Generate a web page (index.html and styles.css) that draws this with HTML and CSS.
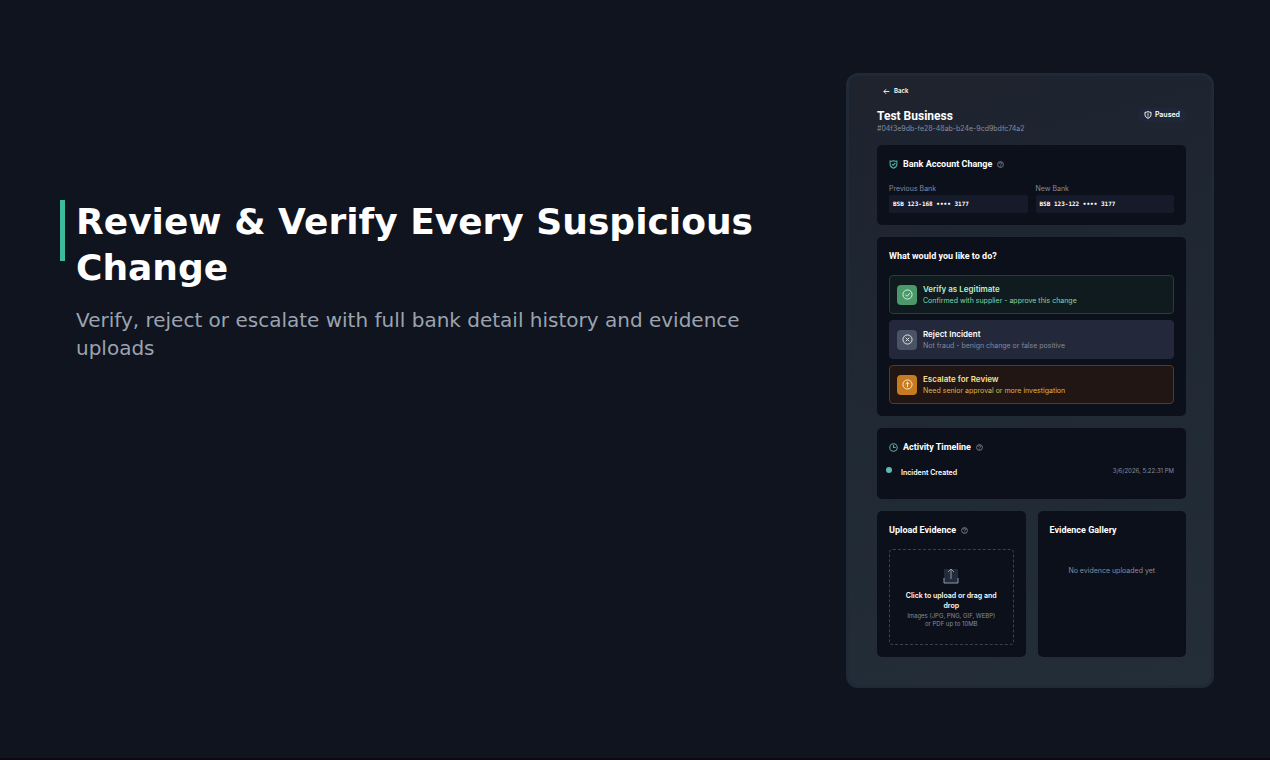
FILE: index.html
```html
<!DOCTYPE html>
<html lang="en">
<head>
    <meta charset="UTF-8">
    <meta name="viewport" content="width=device-width, initial-scale=1.0">
    <title>Review &amp; Verify Every Suspicious Change</title>
    <link rel="stylesheet" href="styles.css">
</head>
<body>
    <main class="slide">
        <section class="copy">
            <span class="accent"></span>
            <div class="copy-text">
                <h1>Review &amp; Verify Every Suspicious Change</h1>
                <p>Verify, reject or escalate with full bank detail history and evidence uploads</p>
            </div>
        </section>

        <section class="panel">
            <button class="back" type="button">
                <svg viewBox="0 0 24 24"><path d="M22 12H3M11 4l-8 8 8 8"/></svg>
                Back
            </button>
            <header class="incident">
                <div>
                    <h2>Test Business</h2>
                    <p>#04f3e9db-fe28-48ab-b24e-9cd9bdfc74a2</p>
                </div>
                <span class="status">
                    <svg viewBox="0 0 24 24"><path d="M3 4c3 0 6-1 9-2 3 1 6 2 9 2v7c0 5-4 9-9 11-5-2-9-6-9-11zM12 7v7M12 16v2"/></svg>
                    Paused
                </span>
            </header>

            <article class="card bank">
                <h3>
                    <svg class="lead" viewBox="0 0 24 24"><path d="M3 3c3 1 6 0 9-1 3 1 6 2 9 1v8c0 5-4 9-9 11-5-2-9-6-9-11zM8 11l3 3 6-6"/></svg>
                    Bank Account Change
                    <svg class="help" viewBox="0 0 24 24"><circle cx="12" cy="12" r="10"/><path d="M8 9c0-5 8-4 8 0 0 3-4 2-4 6M12 17v2"/></svg>
                </h3>
                <dl class="banks">
                    <div>
                        <dt>Previous Bank</dt>
                        <dd>BSB 123-168 •••• 3177</dd>
                    </div>
                    <div>
                        <dt>New Bank</dt>
                        <dd>BSB 123-122 •••• 3177</dd>
                    </div>
                </dl>
            </article>

            <article class="card">
                <h3>What would you like to do?</h3>
                <div class="actions">
                    <button class="action verify" type="button">
                        <span class="tile"><svg viewBox="0 0 24 24"><circle cx="12" cy="12" r="10"/><path d="M7 12l4 4 6-7"/></svg></span>
                        <span class="action-text">
                            <strong>Verify as Legitimate</strong>
                            <small>Confirmed with supplier - approve this change</small>
                        </span>
                    </button>
                    <button class="action reject" type="button">
                        <span class="tile"><svg viewBox="0 0 24 24"><circle cx="12" cy="12" r="10"/><path d="M8 8l8 8M16 8l-8 8"/></svg></span>
                        <span class="action-text">
                            <strong>Reject Incident</strong>
                            <small>Not fraud - benign change or false positive</small>
                        </span>
                    </button>
                    <button class="action escalate" type="button">
                        <span class="tile"><svg viewBox="0 0 24 24"><circle cx="12" cy="12" r="10"/><path d="M12 18V7M8 11l4-4 4 4"/></svg></span>
                        <span class="action-text">
                            <strong>Escalate for Review</strong>
                            <small>Need senior approval or more investigation</small>
                        </span>
                    </button>
                </div>
            </article>

            <article class="card timeline">
                <h3>
                    <svg class="lead" viewBox="0 0 24 24"><circle cx="12" cy="12" r="10"/><path d="M12 5v7h6"/></svg>
                    Activity Timeline
                    <svg class="help" viewBox="0 0 24 24"><circle cx="12" cy="12" r="10"/><path d="M8 9c0-5 8-4 8 0 0 3-4 2-4 6M12 17v2"/></svg>
                </h3>
                <div class="event">
                    <span class="dot"></span>
                    <strong>Incident Created</strong>
                    <time>3/6/2026, 5:22:31 PM</time>
                </div>
            </article>

            <div class="evidence">
                <article class="card">
                    <h3>
                        Upload Evidence
                        <svg class="help" viewBox="0 0 24 24"><circle cx="12" cy="12" r="10"/><path d="M8 9c0-5 8-4 8 0 0 3-4 2-4 6M12 17v2"/></svg>
                    </h3>
                    <button class="dropzone" type="button">
                        <svg viewBox="0 0 16 16"><path class="tray" d="M1 1h14v14H1z"/><path d="M1 10v5h14v-5M8 11V1M5 4l3-3 3 3"/></svg>
                        <strong>Click to upload or drag and drop</strong>
                        <small>Images (JPG, PNG, GIF, WEBP)<br>or PDF up to 10MB</small>
                    </button>
                </article>
                <article class="card">
                    <h3>Evidence Gallery</h3>
                    <p class="empty">No evidence uploaded yet</p>
                </article>
            </div>
        </section>
    </main>
</body>
</html>
```
FILE: styles.css
```css
*, *:before, *:after {
    padding: 0;
    margin: 0;
    box-sizing: border-box;
}
body {
    background: #0f141e;
    color: #fff;
    font-family: "DejaVu Sans", sans-serif;
}
button {
    border: 0;
    background: none;
    color: inherit;
    font: inherit;
    text-align: left;
    cursor: pointer;
}
svg {
    display: block;
    flex: none;
    fill: none;
    stroke: currentColor;
    stroke-width: 3;
}

/* slide */
.slide {
    display: flex;
    align-items: flex-start;
    gap: 60px;
    min-height: 100vh;
    padding: 73px 56px 60px 60px;
    border-bottom: 2px solid #0c0712;
}
.copy {
    display: flex;
    flex: 1;
    align-items: flex-start;
    gap: 11px;
    padding-top: 126px;
}
.accent {
    flex: none;
    width: 5px;
    height: 61px;
    margin-top: 1px;
    background: #3cba9a;
}
.copy h1 {
    font-size: 36px;
    line-height: 46px;
}
.copy p {
    margin-top: 15px;
    color: #9ca3af;
    font-size: 20px;
    line-height: 28px;
}

/* incident panel */
.panel {
    display: flex;
    flex: none;
    flex-direction: column;
    gap: 12px;
    width: 368px;
    padding: 10px 25px 28px 28px;
    border: 3px solid #1f2937;
    border-radius: 12px;
    background: linear-gradient(165deg, #1e232e, #1e2732 35%, #242e38);
    font-family: Inter, sans-serif;
    font-size: 7px;
    line-height: 10px;
}
.back {
    display: flex;
    align-items: center;
    gap: 4px;
    align-self: flex-start;
    margin-left: 6px;
    font-size: 6px;
    font-weight: 600;
}
.back svg {
    width: 7px;
    height: 7px;
}
.incident {
    display: flex;
    align-items: flex-start;
    justify-content: space-between;
}
.incident h2 {
    font: bold 12px/16px Roboto, sans-serif;
}
.incident p {
    color: #858c9d;
    line-height: 9px;
}
.status {
    display: flex;
    align-items: center;
    gap: 3px;
    padding: 2px 6px;
    border-radius: 8px;
    background: #20273a;
    font-weight: 600;
}
.status svg {
    width: 8px;
    height: 8px;
}
.card {
    padding: 12px;
    border-radius: 5px;
    background: #0c101b;
}
.card h3 {
    display: flex;
    align-items: center;
    gap: 5px;
    margin-bottom: 12px;
    font: bold 9px/14px Roboto, sans-serif;
}
.lead {
    width: 9px;
    height: 9px;
    color: #4fa9a0;
}
.help {
    width: 7px;
    height: 7px;
    color: #7c8294;
}

/* bank details */
.banks {
    display: grid;
    grid-template-columns: 1fr 1fr;
    gap: 8px;
}
.banks dt {
    margin-bottom: 1px;
    color: #858c9d;
    line-height: 11px;
}
.banks dd {
    padding: 4px;
    border-radius: 2px;
    background: #161b2b;
    font: bold 6px/10px "DejaVu Sans Mono", monospace;
}

/* actions */
.actions {
    display: flex;
    flex-direction: column;
    gap: 6px;
}
.action {
    display: flex;
    align-items: center;
    gap: 6px;
    padding: 7px;
    border: 1px solid;
    border-radius: 4px;
}
.tile {
    display: grid;
    place-items: center;
    width: 20px;
    height: 20px;
    border-radius: 4px;
}
.tile svg {
    width: 11px;
    height: 11px;
    stroke-width: 2;
    opacity: 0.9;
}
.action-text strong,
.action-text small {
    display: block;
}
.action-text strong {
    font-size: 8px;
    font-weight: 600;
    line-height: 12px;
}
.action-text small {
    font-size: 7px;
    line-height: 11px;
}
.verify {
    border-color: #1b4436;
    background: #101b20;
    color: #bcefcd;
}
.verify small {
    color: #86d5a5;
}
.verify .tile {
    background: #4b9869;
}
.reject {
    border-color: #23293b;
    background: #23283a;
}
.reject small {
    color: #858a9b;
}
.reject .tile {
    background: #4a5366;
}
.escalate {
    border-color: #64351b;
    background: #221614;
    color: #f5e193;
}
.escalate small {
    color: #d8b64b;
}
.escalate .tile {
    background: #c67b20;
}
.tile {
    color: #fff;
}

/* timeline */
.timeline {
    min-height: 71px;
}
.event {
    display: flex;
    align-items: flex-start;
    margin-left: -3px;
}
.event strong {
    flex: 1;
    margin: 2px 0 0 9px;
    font-weight: 600;
}
.event time {
    color: #858c9d;
    font-size: 6px;
}
.dot {
    width: 6px;
    height: 6px;
    margin-top: 1px;
    border-radius: 50%;
    background: #62b9b3;
}

/* evidence */
.evidence {
    display: grid;
    grid-template-columns: 1fr 1fr;
    gap: 12px;
}
.dropzone {
    display: flex;
    flex-direction: column;
    align-items: center;
    width: 100%;
    padding: 18px 14px 16px;
    border: 1px dashed #3a404e;
    border-radius: 4px;
    text-align: center;
}
.dropzone svg {
    width: 16px;
    height: 16px;
    margin-bottom: 7px;
    color: #8e99ad;
    stroke-width: 1;
}
.dropzone .tray {
    fill: #232b3b;
    stroke: none;
}
.dropzone strong {
    font-weight: 600;
}
.dropzone small {
    margin-top: 1px;
    color: #858c9d;
    font-size: 6px;
    line-height: 8px;
    white-space: nowrap;
}
.empty {
    margin-top: 29px;
    color: #858c9d;
    text-align: center;
}
```
